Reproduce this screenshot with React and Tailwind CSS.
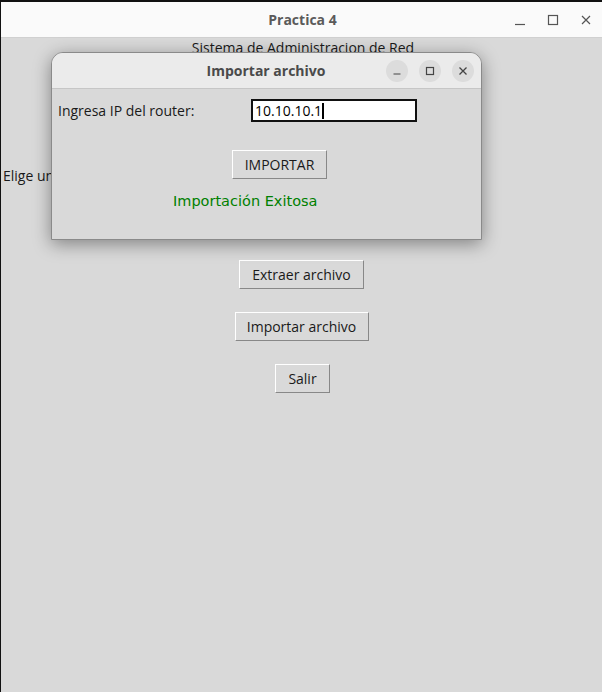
import React from "react";

function TkButton({ children, className = "" }) {
  return (
    <div
      className={
        "flex items-center justify-center h-[29px] border border-t-white border-l-white border-b-[#888888] border-r-[#888888] bg-[#d9d9d9] text-[14px] text-[#1a1a1a] " +
        className
      }
    >
      {children}
    </div>
  );
}

function CircleBtn({ children }) {
  return (
    <div className="w-[22px] h-[22px] rounded-full bg-[#dcdcdc] flex items-center justify-center">
      {children}
    </div>
  );
}

export default function App() {
  const ui = { fontFamily: '"Open Sans", "Noto Sans", sans-serif' };
  return (
    <div className="w-[602px] h-[692px] bg-[#111111] pt-[2px] pl-[1px] overflow-hidden relative" style={ui}>
      <div className="w-full h-full flex flex-col bg-[#d9d9d9] relative">
        {/* title bar */}
        <div className="h-[36px] bg-[#fafafa] border-b border-[#d0d0d0] flex items-center relative shrink-0">
          <div className="flex-1 text-center font-bold text-[14px] text-[#5a5a5a] pl-[2px]">Practica 4</div>
          <div className="absolute right-0 top-0 h-full flex items-center">
            <div className="w-[33px] flex justify-center">
              <svg width="12" height="12" viewBox="0 0 12 12"><path d="M1 10.5h10" stroke="#555" strokeWidth="1.2" /></svg>
            </div>
            <div className="w-[33px] flex justify-center">
              <svg width="12" height="12" viewBox="0 0 12 12"><rect x="1.5" y="1.5" width="9" height="9" fill="none" stroke="#555" strokeWidth="1.2" /></svg>
            </div>
            <div className="w-[33px] flex justify-center">
              <svg width="12" height="12" viewBox="0 0 12 12"><path d="M2 2l8 8M10 2l-8 8" stroke="#555" strokeWidth="1.2" /></svg>
            </div>
          </div>
        </div>
        {/* body */}
        <div className="flex-1 flex flex-col items-center text-[14px] text-[#1a1a1a]">
          <div className="mt-[1px] h-[18px] leading-[18px] pl-[3px]">Sistema de Administracion de Red</div>
          <div className="self-start pl-[2px] mt-[110px] h-[18px] leading-[18px]">Elige una opcion:</div>
          <TkButton className="mt-[75px] w-[125px]">Extraer archivo</TkButton>
          <TkButton className="mt-[23px] w-[134px]">Importar archivo</TkButton>
          <TkButton className="mt-[23px] w-[55px] ml-[2px]">Salir</TkButton>
        </div>

        {/* dialog window */}
        <div className="absolute left-[50px] top-[50px] w-[431px] h-[188px] rounded-t-[12px] border border-[#8a8a8a] bg-[#d9d9d9] shadow-[0_4px_18px_rgba(0,0,0,0.4)] flex flex-col overflow-hidden">
          <div className="h-[36px] bg-[#ebebeb] border-b border-[#c6c6c6] flex items-center relative shrink-0">
            <div className="flex-1 text-center font-bold text-[14px] text-[#4a4a4a] pr-[1px]">Importar archivo</div>
            <div className="absolute right-[7px] top-0 h-full flex items-center gap-[11px]">
              <CircleBtn>
                <svg width="10" height="10" viewBox="0 0 10 10"><path d="M1.5 8h7" stroke="#444" strokeWidth="1.2" /></svg>
              </CircleBtn>
              <CircleBtn>
                <svg width="10" height="10" viewBox="0 0 10 10"><rect x="1.5" y="1.5" width="7" height="7" fill="none" stroke="#444" strokeWidth="1.2" /></svg>
              </CircleBtn>
              <CircleBtn>
                <svg width="10" height="10" viewBox="0 0 10 10"><path d="M1.5 1.5l7 7M8.5 1.5l-7 7" stroke="#444" strokeWidth="1.3" /></svg>
              </CircleBtn>
            </div>
          </div>
          <div className="flex-1 flex flex-col">
            <div className="flex items-center mt-[10px] h-[23px]">
              <div className="pl-[6px] w-[199px] text-[14px] text-[#1a1a1a]">Ingresa IP del router:</div>
              <div className="w-[166px] h-[23px] border-2 border-[#111] bg-white flex items-center pl-[2px] text-[14px] text-black">
                10.10.10.1<span className="inline-block w-[2px] h-[16px] bg-black ml-[0px]"></span>
              </div>
            </div>
            <div className="flex justify-center mt-[28px]">
              <TkButton className="w-[95px] ml-[26px]">IMPORTAR</TkButton>
            </div>
            <div
              className="mt-[13px] ml-[121px] text-[14.5px] text-[#008000] leading-[18px]"
              style={{ fontFamily: '"DejaVu Sans", sans-serif' }}
            >
              Importación Exitosa
            </div>
          </div>
        </div>
      </div>
    </div>
  );
}
